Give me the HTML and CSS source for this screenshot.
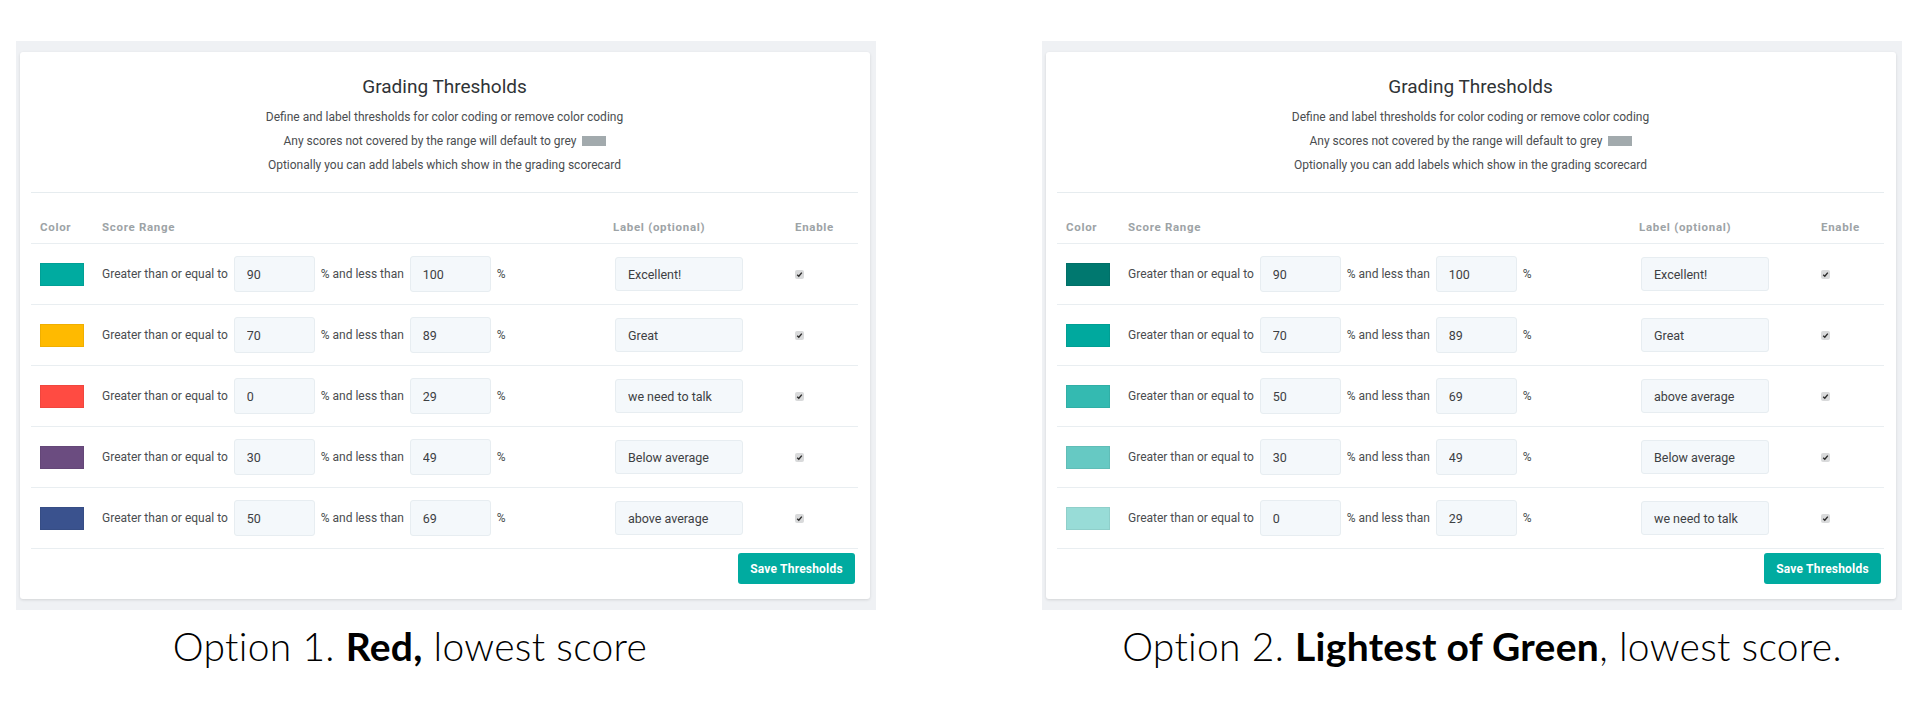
FILE: index.html
```html
<!DOCTYPE html>
<html lang="en">
<head>
    <meta charset="UTF-8">
    <title>Grading Thresholds - colour options</title>
    <link rel="stylesheet" href="styles.css">
</head>
<body>
    <div class="options">

        <!-- Option 1: red marks the lowest band -->
        <div class="option">
            <div class="frame">
                <div class="card">
                    <h2>Grading Thresholds</h2>
                    <div class="intro">
                        <p>Define and label thresholds for color coding or remove color coding</p>
                        <p>Any scores not covered by the range will default to grey <span class="grey-chip"></span></p>
                        <p>Optionally you can add labels which show in the grading scorecard</p>
                    </div>
                    <div class="table">
                        <div class="row head">
                            <div>Color</div>
                            <div>Score Range</div>
                            <div>Label (optional)</div>
                            <div>Enable</div>
                        </div>
                        <div class="row">
                            <div><span class="swatch teal"></span></div>
                            <div class="range">Greater than or equal to <input class="num" value="90"> % and less than <input class="num" value="100"> %</div>
                            <div><input class="label" value="Excellent!"></div>
                            <div><span class="check"><svg viewBox="0 0 9 9"><path d="M2.2 4.8 L3.8 6.3 L6.8 2.6"/></svg></span></div>
                        </div>
                        <div class="row">
                            <div><span class="swatch yellow"></span></div>
                            <div class="range">Greater than or equal to <input class="num" value="70"> % and less than <input class="num" value="89"> %</div>
                            <div><input class="label" value="Great"></div>
                            <div><span class="check"><svg viewBox="0 0 9 9"><path d="M2.2 4.8 L3.8 6.3 L6.8 2.6"/></svg></span></div>
                        </div>
                        <div class="row">
                            <div><span class="swatch red"></span></div>
                            <div class="range">Greater than or equal to <input class="num" value="0"> % and less than <input class="num" value="29"> %</div>
                            <div><input class="label" value="we need to talk"></div>
                            <div><span class="check"><svg viewBox="0 0 9 9"><path d="M2.2 4.8 L3.8 6.3 L6.8 2.6"/></svg></span></div>
                        </div>
                        <div class="row">
                            <div><span class="swatch purple"></span></div>
                            <div class="range">Greater than or equal to <input class="num" value="30"> % and less than <input class="num" value="49"> %</div>
                            <div><input class="label" value="Below average"></div>
                            <div><span class="check"><svg viewBox="0 0 9 9"><path d="M2.2 4.8 L3.8 6.3 L6.8 2.6"/></svg></span></div>
                        </div>
                        <div class="row">
                            <div><span class="swatch blue"></span></div>
                            <div class="range">Greater than or equal to <input class="num" value="50"> % and less than <input class="num" value="69"> %</div>
                            <div><input class="label" value="above average"></div>
                            <div><span class="check"><svg viewBox="0 0 9 9"><path d="M2.2 4.8 L3.8 6.3 L6.8 2.6"/></svg></span></div>
                        </div>
                    </div>
                    <div class="actions">
                        <button>Save Thresholds</button>
                    </div>
                </div>
            </div>
            <p class="caption first">Option 1. <strong>Red,</strong> lowest score</p>
        </div>

        <!-- Option 2: shades of green, lightest is lowest -->
        <div class="option">
            <div class="frame">
                <div class="card">
                    <h2>Grading Thresholds</h2>
                    <div class="intro">
                        <p>Define and label thresholds for color coding or remove color coding</p>
                        <p>Any scores not covered by the range will default to grey <span class="grey-chip"></span></p>
                        <p>Optionally you can add labels which show in the grading scorecard</p>
                    </div>
                    <div class="table">
                        <div class="row head">
                            <div>Color</div>
                            <div>Score Range</div>
                            <div>Label (optional)</div>
                            <div>Enable</div>
                        </div>
                        <div class="row">
                            <div><span class="swatch green-1"></span></div>
                            <div class="range">Greater than or equal to <input class="num" value="90"> % and less than <input class="num" value="100"> %</div>
                            <div><input class="label" value="Excellent!"></div>
                            <div><span class="check"><svg viewBox="0 0 9 9"><path d="M2.2 4.8 L3.8 6.3 L6.8 2.6"/></svg></span></div>
                        </div>
                        <div class="row">
                            <div><span class="swatch green-2"></span></div>
                            <div class="range">Greater than or equal to <input class="num" value="70"> % and less than <input class="num" value="89"> %</div>
                            <div><input class="label" value="Great"></div>
                            <div><span class="check"><svg viewBox="0 0 9 9"><path d="M2.2 4.8 L3.8 6.3 L6.8 2.6"/></svg></span></div>
                        </div>
                        <div class="row">
                            <div><span class="swatch green-3"></span></div>
                            <div class="range">Greater than or equal to <input class="num" value="50"> % and less than <input class="num" value="69"> %</div>
                            <div><input class="label" value="above average"></div>
                            <div><span class="check"><svg viewBox="0 0 9 9"><path d="M2.2 4.8 L3.8 6.3 L6.8 2.6"/></svg></span></div>
                        </div>
                        <div class="row">
                            <div><span class="swatch green-4"></span></div>
                            <div class="range">Greater than or equal to <input class="num" value="30"> % and less than <input class="num" value="49"> %</div>
                            <div><input class="label" value="Below average"></div>
                            <div><span class="check"><svg viewBox="0 0 9 9"><path d="M2.2 4.8 L3.8 6.3 L6.8 2.6"/></svg></span></div>
                        </div>
                        <div class="row">
                            <div><span class="swatch green-5"></span></div>
                            <div class="range">Greater than or equal to <input class="num" value="0"> % and less than <input class="num" value="29"> %</div>
                            <div><input class="label" value="we need to talk"></div>
                            <div><span class="check"><svg viewBox="0 0 9 9"><path d="M2.2 4.8 L3.8 6.3 L6.8 2.6"/></svg></span></div>
                        </div>
                    </div>
                    <div class="actions">
                        <button>Save Thresholds</button>
                    </div>
                </div>
            </div>
            <p class="caption second">Option 2. <strong>Lightest of Green</strong>, lowest score.</p>
        </div>

    </div>
</body>
</html>
```

FILE: styles.css
```css
body {
    margin: 0;
    background: #fff;
    font-family: Roboto, "Liberation Sans", sans-serif;
    font-size: 12px;
    color: #4a4d50;
}
.options {
    display: flex;
    gap: 166px;
    padding: 41px 0 0 16px;
}
.option {
    width: 860px;
}
.frame {
    background: #eff1f4;
    padding: 11px 6px 11px 4px;
}
.card {
    background: #fff;
    border-radius: 3px;
    box-shadow: 0 1px 3px rgba(0, 0, 0, 0.12);
    padding: 23px 12px 15px 11px;
}
h2 {
    margin: 0;
    text-align: center;
    font-weight: 400;
    font-size: 19px;
    line-height: 24px;
    color: #2f3336;
}
.intro {
    margin-top: 6px;
    padding-bottom: 15px;
    border-bottom: 1px solid #e6ecef;
    text-align: center;
}
.intro p {
    margin: 0;
    line-height: 24px;
}
.grey-chip {
    display: inline-block;
    width: 24px;
    height: 10px;
    background: #a2aaad;
    vertical-align: -1px;
    margin-left: 2px;
}
.row {
    display: grid;
    grid-template-columns: 62px 511px 182px 1fr;
    align-items: center;
    height: 60px;
    border-bottom: 1px solid #e9eef1;
}
.row > div {
    padding-left: 9px;
}
.row.head {
    height: auto;
    padding: 27px 0 9px;
    font-weight: 700;
    font-size: 11.5px;
    line-height: 14px;
    letter-spacing: 0.7px;
    color: #9da3a6;
}
.swatch {
    display: block;
    width: 44px;
    height: 23px;
    box-sizing: border-box;
    border: 1px solid rgba(0, 0, 0, 0.06);
}
.teal { background: #00aba0; }
.yellow { background: #ffba00; }
.red { background: #ff4b42; }
.purple { background: #6b4c80; }
.blue { background: #3a528e; }
.green-1 { background: #00786f; }
.green-2 { background: #00a99e; }
.green-3 { background: #34bab1; }
.green-4 { background: #66c9c3; }
.green-5 { background: #98dcd7; }
.range {
    display: flex;
    align-items: center;
    gap: 6px;
    white-space: nowrap;
}
input {
    box-sizing: border-box;
    font-family: inherit;
    font-size: 12.5px;
    color: #3d4043;
    background: #f4f8fb;
    border: 1px solid #e7edf1;
    border-radius: 3px;
    padding: 0 12px;
    outline: none;
}
.num {
    width: 81px;
    height: 36px;
}
.label {
    width: 128px;
    height: 34px;
    margin-left: 2px;
}
.check {
    display: block;
    width: 9px;
    height: 9px;
    border-radius: 2px;
    background: #d9dadb;
}
.check svg {
    display: block;
    width: 9px;
    height: 9px;
    fill: none;
    stroke: #2b2b2b;
    stroke-width: 1.4;
}
.actions {
    display: flex;
    justify-content: flex-end;
    padding: 4px 3px 0 0;
}
button {
    width: 117px;
    height: 31px;
    border: none;
    border-radius: 3px;
    background: #00aba0;
    color: #fff;
    font-family: inherit;
    font-size: 12px;
    font-weight: 700;
    letter-spacing: 0.2px;
    cursor: pointer;
}
.caption {
    margin: 14px 0 0;
    font-family: Lato, "Noto Sans", sans-serif;
    font-weight: 300;
    font-size: 39px;
    line-height: 44px;
    letter-spacing: 0.3px;
    color: #000;
    text-align: center;
}
.caption strong {
    font-weight: 700;
}
.caption.first {
    padding-right: 72px;
}
.caption.second {
    padding-left: 20px;
}
```
